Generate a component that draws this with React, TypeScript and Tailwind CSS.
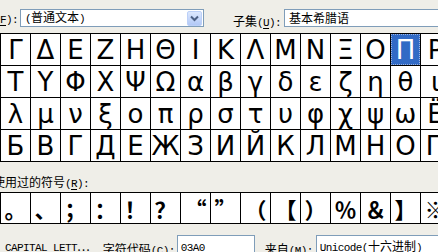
import { ReactNode } from "react";

const rows = [
    ["Γ", "Δ", "Ε", "Ζ", "Η", "Θ", "Ι", "Κ", "Λ", "Μ", "Ν", "Ξ", "Ο", "Π", "Ρ"],
    ["Τ", "Υ", "Φ", "Χ", "Ψ", "Ω", "α", "β", "γ", "δ", "ε", "ζ", "η", "θ", "ι"],
    ["λ", "μ", "ν", "ξ", "ο", "π", "ρ", "σ", "τ", "υ", "φ", "χ", "ψ", "ω", "Ё"],
    ["Б", "В", "Г", "Д", "Е", "Ж", "З", "И", "Й", "К", "Л", "М", "Н", "О", "П"],
];

const recent = ["。", "、", "；", "：", "！", "？", "“", "”", "（", "【", "）", "％", "＆", "】", "※"];

// half-width latin, sized like the 12px system font
function H({ children, u }: { children: ReactNode; u?: boolean }) {
    return (
        <span className={`font-['Liberation_Mono',monospace] text-[11px] tracking-[-0.6px] ${u ? "underline underline-offset-2" : ""}`}>
            {children}
        </span>
    );
}

function Label({ cjk, hot }: { cjk: string; hot: string }) {
    return (
        <span className="whitespace-nowrap leading-[12px]">
            {cjk}
            <H>(</H>
            <H u>{hot}</H>
            <H>):</H>
        </span>
    );
}

export default function App() {
    return (
        <div className="w-[438px] h-[252px] overflow-hidden bg-[#efeee8] text-black text-[12px] font-['Noto_Sans_CJK_SC',sans-serif] flex flex-col">
            {/* top bar */}
            <div className="h-[33px] shrink-0 flex items-start pt-[9px]">
                <span className="mt-[3px] leading-[12px] whitespace-nowrap">
                    <H u>F</H>
                    <H>):</H>
                </span>
                <div className="ml-[2px] w-[184px] h-[18px] bg-white border border-[#7f9db9] flex items-center justify-between pl-[4px] pr-[1px]">
                    <span className="leading-[12px] whitespace-nowrap">
                        <H>(</H>普通文本<H>)</H>
                    </span>
                    <div className="w-[15px] h-[15px] rounded-[2px] bg-gradient-to-b from-[#dce8fe] to-[#b2c8f6] border border-[#bcd0f8] flex items-center justify-center">
                        <svg width="9" height="7" viewBox="0 0 9 7">
                            <path d="M1 1.5 L4.5 5 L8 1.5" fill="none" stroke="#4d6185" strokeWidth="2" />
                        </svg>
                    </div>
                </div>
                <div className="ml-[29px] mt-[3px]">
                    <Label cjk="子集" hot="U" />
                </div>
                <div className="ml-[3px] flex-1 h-[18px] bg-white border border-[#7f9db9] border-r-0 flex items-center pl-[4px]">
                    <span className="leading-[12px] whitespace-nowrap">基本希腊语</span>
                </div>
            </div>

            {/* character grid */}
            <div className="shrink-0 border-b border-black bg-white">
                {rows.map((row, r) => (
                    <div key={r} className="flex">
                        {row.map((ch, c) => {
                            const sel = r === 0 && c === 13;
                            return (
                                <div
                                    key={c}
                                    className="w-[30px] h-[32px] shrink-0 border-l border-t border-black flex"
                                >
                                    <div
                                        className={`flex-1 flex items-center justify-center font-['DejaVu_Sans',sans-serif] text-[26px] leading-none ${
                                            sel ? "bg-[#316ac5] text-white border border-dotted border-[#9fb6e0]" : ""
                                        }`}
                                    >
                                        {ch}
                                    </div>
                                </div>
                            );
                        })}
                    </div>
                ))}
            </div>

            {/* recently used label */}
            <div className="h-[30px] shrink-0 flex items-start pt-[14px] ml-[-7px]">
                <Label cjk="使用过的符号" hot="R" />
            </div>

            {/* recently used symbols */}
            <div className="shrink-0 flex border-y border-black bg-white">
                {recent.map((ch, i) => (
                    <div
                        key={i}
                        className="w-[30px] h-[30px] shrink-0 border-l border-black flex items-center justify-center text-[22px] leading-none font-bold font-['Noto_Sans_CJK_SC',serif]"
                    >
                        {ch}
                    </div>
                ))}
            </div>

            {/* status line */}
            <div className="flex-1 flex items-start pt-[11px]">
                <span className="ml-[5px] mt-[5px] leading-[12px] whitespace-nowrap">
                    <H>CAPITAL LETT</H>⋯
                </span>
                <span className="ml-[13px] mt-[5px]">
                    <Label cjk="字符代码" hot="C" />
                </span>
                <div className="ml-[2px] w-[78px] h-[20px] bg-white border border-[#7f9db9] pl-[3px] pt-[4px] leading-[12px]">
                    <H>03A0</H>
                </div>
                <span className="ml-[10px] mt-[5px]">
                    <Label cjk="来自" hot="M" />
                </span>
                <div className="ml-[3px] flex-1 h-[20px] bg-white border border-[#7f9db9] border-r-0 pl-[3px] pt-[4px] leading-[12px] whitespace-nowrap">
                    <H>Unicode(</H>十六进制<H>)</H>
                </div>
            </div>
        </div>
    );
}
